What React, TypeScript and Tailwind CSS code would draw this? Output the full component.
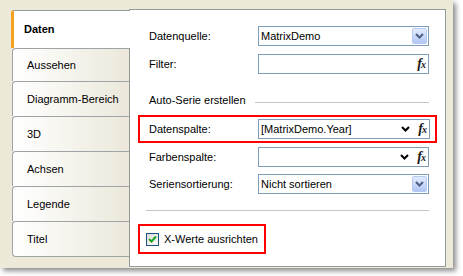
import React from 'react';

const tabs = ['Daten', 'Aussehen', 'Diagramm-Bereich', '3D', 'Achsen', 'Legende', 'Titel'];

// XP style combo button
const DropButton = () => (
    <div className="w-[15px] h-[16px] rounded-[2px] border border-[#b5c9f5] bg-linear-to-b from-[#e3ebfe] to-[#b3c7f5] flex items-center justify-center">
        <svg width="9" height="6" viewBox="0 0 9 6">
            <path d="M1 1 L4.5 4.5 L8 1" fill="none" stroke="#4d6185" strokeWidth="2" />
        </svg>
    </div>
);

const Chevron = () => (
    <svg width="9" height="6" viewBox="0 0 9 6" className="mr-[8px]">
        <path d="M1 1 L4.5 4.5 L8 1" fill="none" stroke="#000" strokeWidth="2" />
    </svg>
);

const Fx = () => (
    <span className="font-['Liberation_Serif',serif] italic font-bold text-[14px] leading-none text-[#1a1a1a] mr-[2px] tracking-[-1px]">
        f<span className="text-[10px]">x</span>
    </span>
);

const Box: React.FC<{ text?: string; children?: React.ReactNode }> = ({ text, children }) => (
    <div className="flex-1 h-[20px] border border-[#7f9db9] bg-white flex items-center pl-[2px] pr-px">
        <span className="flex-1 whitespace-nowrap">{text}</span>
        {children}
    </div>
);

const Row: React.FC<{ label: string; className?: string; children: React.ReactNode }> = ({ label, className, children }) => (
    <div className={`flex items-center h-[20px] ${className ?? ''}`}>
        <span className="w-[109px] whitespace-nowrap">{label}</span>
        {children}
    </div>
);

export default function App() {
    return (
        <div className="w-[463px] h-[276px] bg-white overflow-hidden font-['Liberation_Sans',Arial,sans-serif] text-[11px] text-black">
            <div className="w-[453px] h-[268px] bg-[#ece9d8] shadow-[3px_3px_5px_rgba(0,0,0,0.45)] flex pl-[12px] pt-[9px] pr-[7px] pb-px">
                {/* Tabs */}
                <div className="w-[117px] pt-px flex flex-col relative z-10">
                    {tabs.map((t, i) =>
                        i === 0 ? (
                            <div
                                key={t}
                                className="h-[38px] -ml-px -mr-px bg-white border-t border-[#919b9c] border-l-[3px] border-l-[#f4a11d] rounded-tl-[3px] flex items-center pl-[10px] font-bold"
                            >
                                {t}
                            </div>
                        ) : (
                            <div
                                key={t}
                                className={`${i === 1 ? 'h-[33px]' : 'h-[35px]'} ${i === tabs.length - 1 ? 'h-[36px] border-b rounded-bl-[4px]' : ''} border-l border-t border-[#9ea3a6] rounded-tl-[4px] bg-linear-to-r from-white to-[#ebe8da] flex items-center pl-[14px]`}
                            >
                                {t}
                            </div>
                        )
                    )}
                </div>

                {/* Panel */}
                <div className="flex-1 border border-[#919b9c] bg-white flex flex-col">
                    <div className="pl-[19px] pr-[16px]">
                        <Row label="Datenquelle:" className="mt-[16px]">
                            <Box text="MatrixDemo">
                                <DropButton />
                            </Box>
                        </Row>
                        <Row label="Filter:" className="mt-[8px]">
                            <Box>
                                <Fx />
                            </Box>
                        </Row>
                        <div className="flex items-center h-[16px] mt-[18px]">
                            <span className="whitespace-nowrap">Auto-Serie erstellen</span>
                            <div className="flex-1 h-px bg-[#c5c5c5] ml-[9px] mt-[4px]" />
                        </div>
                    </div>

                    <div className="mt-[7px] mx-[8px] h-[28px] border-2 border-[#ff0000] flex items-center pl-[9px] pr-[5px]">
                        <Row label="Datenspalte:" className="flex-1">
                            <Box text="[MatrixDemo.Year]">
                                <Chevron />
                                <Fx />
                            </Box>
                        </Row>
                    </div>

                    <div className="pl-[19px] pr-[16px]">
                        <Row label="Farbenspalte:" className="mt-[4px]">
                            <Box>
                                <Chevron />
                                <Fx />
                            </Box>
                        </Row>
                        <Row label="Seriensortierung:" className="mt-[7px]">
                            <Box text="Nicht sortieren">
                                <DropButton />
                            </Box>
                        </Row>
                    </div>

                    <div className="mt-[16px] mx-[16px] h-px bg-[#c5c5c5]" />

                    <div className="mt-[13px] ml-[8px] w-[128px] h-[30px] border-2 border-[#ff0000] flex items-center pl-[6px] gap-[5px]">
                        <div className="w-[13px] h-[13px] border border-[#1c5180] bg-linear-to-br from-[#dcdcd7] to-white flex items-center justify-center">
                            <svg width="9" height="8" viewBox="0 0 9 8">
                                <path d="M1 4 L3.5 6.5 L8 1.5" fill="none" stroke="#21a121" strokeWidth="2" />
                            </svg>
                        </div>
                        <span className="whitespace-nowrap">X-Werte ausrichten</span>
                    </div>
                </div>
            </div>
        </div>
    );
}
